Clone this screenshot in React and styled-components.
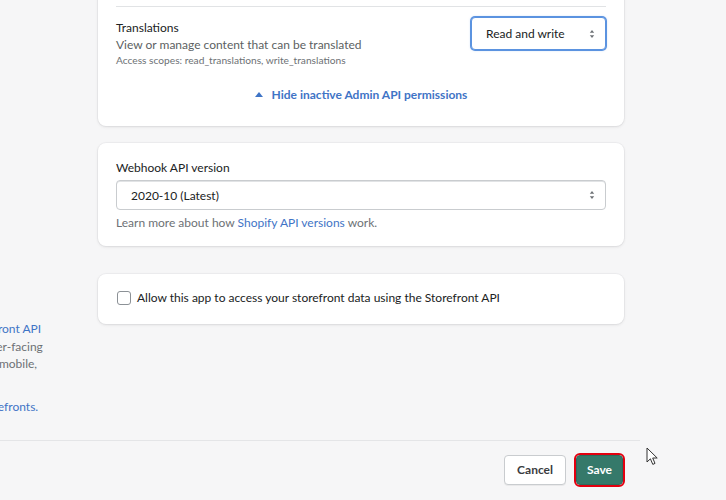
import React from 'react';
import styled, { createGlobalStyle } from 'styled-components';

const GlobalStyle = createGlobalStyle`
  html, body {
    margin: 0;
    padding: 0;
    background: #f6f6f7;
  }
  body {
    font-family: Lato, 'Noto Sans', sans-serif;
    color: #202223;
    -webkit-font-smoothing: antialiased;
  }
`;

const Page = styled.div`
  position: relative;
  width: 726px;
  height: 500px;
  overflow: hidden;
  background: #f6f6f7;
`;

const Layout = styled.div`
  width: 751px;
  margin-left: -127px;
`;

const Section = styled.div`
  display: flex;
  gap: 20px;
  margin-top: ${(p) => p.offset || 0}px;
`;

const Annotation = styled.div`
  flex: 0 0 205px;
  min-width: 0;
  padding-top: 18px;
  font-size: 12px;
  line-height: 17.5px;
  color: #6d7175;
  white-space: nowrap;

  h2 {
    margin: 0;
    font-size: 15px;
    line-height: 20px;
    font-weight: 700;
    color: #202223;
  }

  p {
    margin: 8px 0 0;
  }
`;

const Cards = styled.div`
  flex: 0 0 526px;
  display: flex;
  flex-direction: column;
  gap: 17px;
`;

const Card = styled.div`
  background: #fff;
  border-radius: 8px;
  box-shadow: 0 0 0 1px rgba(63, 63, 68, 0.04), 0 1px 3px rgba(63, 63, 68, 0.12);
  padding: ${(p) => p.pad || '18px'};
`;

const PermissionRow = styled.div`
  display: flex;
  justify-content: space-between;
  align-items: flex-start;
  padding: 12px 0;
  border-top: 1px solid #e1e3e5;

  &:first-child {
    padding-top: 0;
    border-top: none;
  }
`;

const RowText = styled.div`
  display: flex;
  flex-direction: column;
`;

const RowTitle = styled.span`
  font-size: 12px;
  line-height: 17px;
  color: #202223;
`;

const RowDesc = styled.span`
  font-size: 12px;
  line-height: 17px;
  color: #5c5f62;
`;

const RowScopes = styled.span`
  font-size: 10.2px;
  line-height: 15px;
  color: #6d7175;
`;

const SelectBox = styled.div`
  display: flex;
  align-items: center;
  justify-content: space-between;
  box-sizing: border-box;
  width: ${(p) => p.width || '100%'};
  height: ${(p) => p.height || 30}px;
  margin-top: ${(p) => (p.focused ? -2 : 0)}px;
  padding: 0 10px 0 14px;
  background: #fff;
  border: 1px solid ${(p) => (p.focused ? '#5b93e0' : '#c9cccf')};
  border-radius: 4px;
  box-shadow: ${(p) =>
    p.focused ? '0 0 0 1px #5b93e0, 0 0 3px rgba(70, 130, 220, 0.4)' : 'inset 0 1px 0 #e1e3e5'};
  font-size: 12px;
  color: #202223;
`;

const Arrows = () => (
  <svg width="6" height="10" viewBox="0 0 6 10">
    <path d="M3 1 L5.2 3.8 H0.8 Z M3 9 L0.8 6.2 H5.2 Z" fill="#6d7175" />
  </svg>
);

const ToggleRow = styled.div`
  display: flex;
  justify-content: center;
  align-items: center;
  gap: 9px;
  padding: 6px 0 5px;
  font-size: 12px;
  line-height: 17px;
  font-weight: 700;
  color: #3f74c6;
`;

const FieldLabel = styled.div`
  font-size: 12px;
  line-height: 17px;
  color: #202223;
  margin-bottom: 4px;
`;

const HelpText = styled.div`
  margin-top: 4px;
  font-size: 12px;
  line-height: 17px;
  color: #6d7175;
`;

const Link = styled.span`
  color: #3f74c6;
`;

const CheckRow = styled.label`
  display: flex;
  align-items: center;
  gap: 6px;
  font-size: 12px;
  line-height: 18px;
  color: #202223;
`;

const CheckBox = styled.span`
  box-sizing: border-box;
  width: 14px;
  height: 14px;
  border: 1.5px solid #8c9196;
  border-radius: 3px;
  background: #fff;
  margin-left: 1px;
`;

const PageActions = styled.div`
  display: flex;
  justify-content: flex-end;
  gap: 10px;
  margin-top: 24px;
  margin-right: -16px;
  padding: 14px 17px 0 0;
  border-top: 1px solid #e4e5e7;
`;

const Button = styled.button`
  height: 30px;
  padding: 0 ${(p) => (p.primary ? 10 : 12)}px;
  border-radius: 4px;
  font-family: inherit;
  font-size: 12px;
  font-weight: 700;
  cursor: pointer;
  color: ${(p) => (p.primary ? '#fff' : '#3a3c3f')};
  background: ${(p) => (p.primary ? '#35796a' : '#fff')};
  border: 1px solid ${(p) => (p.primary ? '#2d6a5c' : '#c9cccf')};
  outline: ${(p) => (p.highlight ? '2px solid #e3000f' : 'none')};
  box-shadow: ${(p) => (p.primary ? 'none' : '0 1px 0 rgba(0,0,0,0.05)')};
`;

const Pointer = styled.svg`
  position: absolute;
  left: 646px;
  top: 447px;
`;

export default function App() {
  return (
    <Page>
      <GlobalStyle />
      <Layout>
        <Section offset={-73}>
          <Annotation />
          <Cards>
            <Card pad="18px 18px 18px">
              <PermissionRow>
                <RowText>
                  <RowTitle>Themes</RowTitle>
                  <RowDesc>View or manage theme templates and assets</RowDesc>
                  <RowScopes>Access scopes: read_themes, write_themes</RowScopes>
                </RowText>
                <SelectBox width="135px" height={33}>
                  No access <Arrows />
                </SelectBox>
              </PermissionRow>
              <PermissionRow>
                <RowText>
                  <RowTitle>Translations</RowTitle>
                  <RowDesc>View or manage content that can be translated</RowDesc>
                  <RowScopes>Access scopes: read_translations, write_translations</RowScopes>
                </RowText>
                <SelectBox width="135px" height={33} focused>
                  Read and write <Arrows />
                </SelectBox>
              </PermissionRow>
              <ToggleRow>
                <svg width="8" height="5" viewBox="0 0 8 5">
                  <path d="M0 5 L4 0 L8 5 Z" fill="#3f74c6" />
                </svg>
                Hide inactive Admin API permissions
              </ToggleRow>
            </Card>

            <Card pad="16px 18px 15px">
              <FieldLabel>Webhook API version</FieldLabel>
              <SelectBox>
                2020-10 (Latest) <Arrows />
              </SelectBox>
              <HelpText>
                Learn more about how <Link>Shopify API versions</Link> work.
              </HelpText>
            </Card>
          </Cards>
        </Section>

        <Section offset={28}>
          <Annotation>
            <h2>Storefront API</h2>
            <p>
              Apps can use the <Link>Storefront API</Link>
              <br />
              to build custom customer-facing
              <br />
              storefronts on the web, mobile,
              <br />
              and more.
            </p>
            <p>
              Read about <Link>custom storefronts.</Link>
            </p>
          </Annotation>
          <Cards>
            <Card pad="15px 18px 17px">
              <CheckRow>
                <CheckBox />
                Allow this app to access your storefront data using the Storefront API
              </CheckRow>
            </Card>
          </Cards>
        </Section>

        <PageActions>
          <Button>Cancel</Button>
          <Button primary highlight>
            Save
          </Button>
        </PageActions>
      </Layout>

      <Pointer width="13" height="19" viewBox="0 0 13 19">
        <path
          d="M1 1 L1 15 L4.4 11.8 L6.8 17.4 L9 16.4 L6.7 11 L11.2 11 Z"
          fill="#fff"
          stroke="#333"
          strokeWidth="1"
          strokeLinejoin="round"
        />
      </Pointer>
    </Page>
  );
}
